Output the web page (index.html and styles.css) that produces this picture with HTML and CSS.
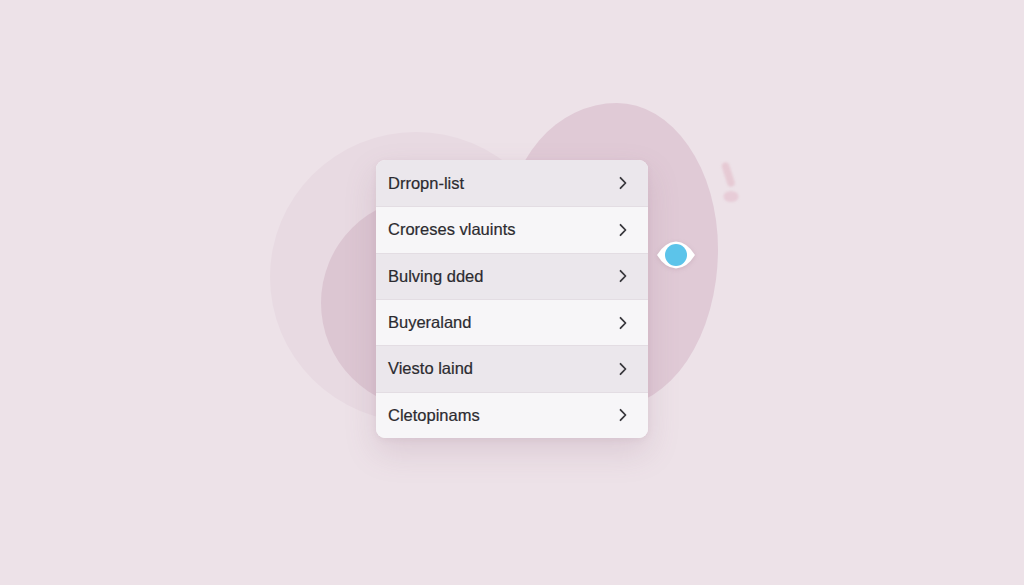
FILE: index.html
```html
<!DOCTYPE html>
<html lang="en">
<head>
<meta charset="utf-8">
<title>Drropn-list</title>
<link rel="stylesheet" href="styles.css">
</head>
<body>
<main class="stage">
  <div class="blob blob-halo"></div>
  <div class="blob blob-left"></div>
  <div class="blob blob-right"></div>

  <svg class="mark" width="20" height="46" viewBox="0 0 20 46" aria-hidden="true">
    <line x1="5.5" y1="7" x2="11" y2="24" stroke="#e6cad4" stroke-width="7.5" stroke-linecap="round"/>
    <ellipse cx="11" cy="37.5" rx="7.5" ry="5.5" fill="#e7ccd7"/>
  </svg>

  <ul class="menu">
    <li class="item"><span>Drropn-list</span><svg class="chev" width="10" height="14" viewBox="0 0 10 14"><polyline points="2.5,1.8 7.5,7 2.5,12.2"/></svg></li>
    <li class="item"><span>Croreses vlauints</span><svg class="chev" width="10" height="14" viewBox="0 0 10 14"><polyline points="2.5,1.8 7.5,7 2.5,12.2"/></svg></li>
    <li class="item"><span>Bulving dded</span><svg class="chev" width="10" height="14" viewBox="0 0 10 14"><polyline points="2.5,1.8 7.5,7 2.5,12.2"/></svg></li>
    <li class="item"><span>Buyeraland</span><svg class="chev" width="10" height="14" viewBox="0 0 10 14"><polyline points="2.5,1.8 7.5,7 2.5,12.2"/></svg></li>
    <li class="item"><span>Viesto laind</span><svg class="chev" width="10" height="14" viewBox="0 0 10 14"><polyline points="2.5,1.8 7.5,7 2.5,12.2"/></svg></li>
    <li class="item"><span>Cletopinams</span><svg class="chev" width="10" height="14" viewBox="0 0 10 14"><polyline points="2.5,1.8 7.5,7 2.5,12.2"/></svg></li>
  </ul>

  <svg class="eye" width="40" height="30" viewBox="0 0 40 30" aria-hidden="true">
    <path d="M1 15 Q9 2 20 1.5 Q31 2 39 15 Q31 28 20 28.5 Q9 28 1 15 Z" fill="#ffffff"/>
    <circle cx="20" cy="15" r="11" fill="#5cc4ea"/>
  </svg>
</main>
</body>
</html>
```

FILE: styles.css
```css
* { box-sizing: border-box; }

html, body {
  margin: 0;
  padding: 0;
  width: 1024px;
  height: 585px;
  overflow: hidden;
  background: #ede2e8;
  font-family: "Liberation Sans", Arial, sans-serif;
}

.stage {
  position: relative;
  width: 1024px;
  height: 585px;
  display: flex;
  justify-content: center;
  align-items: flex-start;
  padding-top: 160px;
}

/* soft background shapes */
.blob {
  position: absolute;
  border-radius: 50%;
}

.blob-halo {
  left: 270px;
  top: 132px;
  width: 292px;
  height: 290px;
  background: #e8dae2;
}

.blob-left {
  left: 321px;
  top: 197px;
  width: 212px;
  height: 212px;
  background: #dcc6d2;
}

.blob-right {
  left: 507px;
  top: 103px;
  width: 211px;
  height: 304px;
  border-radius: 52% 48% 50% 50% / 42% 48% 52% 58%;
  background: #e0cad6;
}

.mark {
  position: absolute;
  left: 720px;
  top: 159px;
  filter: blur(0.8px);
}

.eye {
  position: absolute;
  left: 656px;
  top: 240px;
  filter: drop-shadow(0 1px 2px rgba(150, 110, 130, 0.25));
}

/* dropdown card */
.menu {
  position: relative;
  list-style: none;
  margin: 0;
  padding: 0;
  width: 272px;
  border-radius: 9px;
  overflow: hidden;
  background: #f7f6f8;
  box-shadow: 0 14px 32px rgba(140, 95, 120, 0.18), 0 2px 6px rgba(140, 95, 120, 0.08);
}

.item {
  height: 46.33px;
  display: flex;
  align-items: center;
  justify-content: space-between;
  padding: 0 20px 0 12px;
  font-size: 16.5px;
  color: #2c2b30;
  -webkit-text-stroke: 0.2px #2c2b30;
  background: #f7f6f8;
}

.item + .item {
  border-top: 1px solid #e3dde3;
}

.item:nth-child(odd) {
  background: #ebe7ec;
}

.chev {
  fill: none;
  stroke: #3a393e;
  stroke-width: 1.8;
  stroke-linecap: round;
  stroke-linejoin: round;
}
```
